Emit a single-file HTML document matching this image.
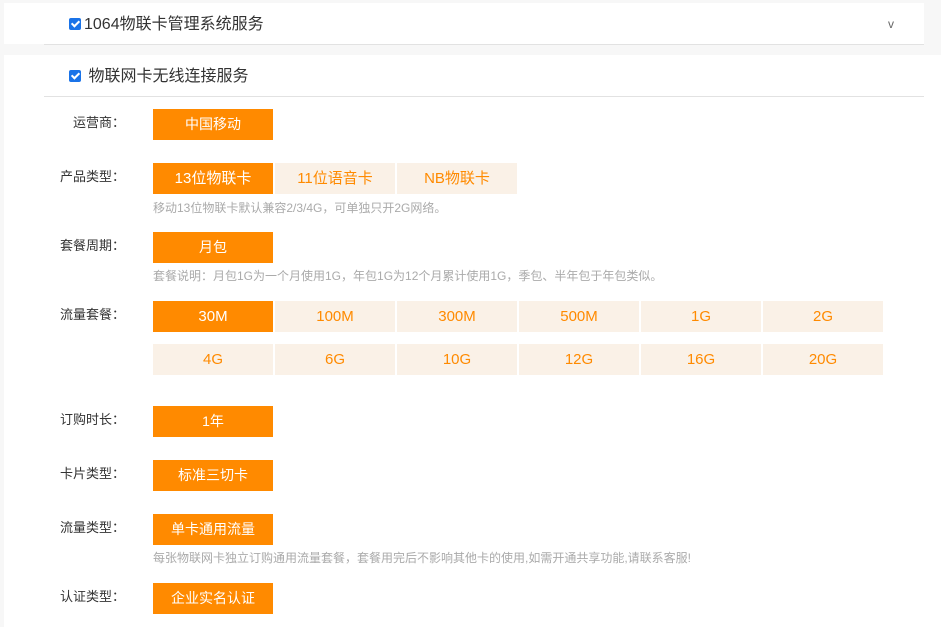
<!DOCTYPE html>
<html><head><meta charset="utf-8"><style>
body{margin:0;width:941px;height:627px;background:#f7f7f7;font-family:"Liberation Sans","Noto Sans CJK SC",sans-serif;position:relative;overflow:hidden}
.card{position:absolute;background:#fff}
.line{position:absolute;left:44px;width:880px;height:1px;background:#e2e2e2}
.t{position:absolute;font-size:16px;color:#333;line-height:20px}
.cb{display:inline-block;width:12px;height:12px;background:#1a73e8;border-radius:2px;vertical-align:-1px;margin-right:3px;position:relative}
.cb:after{content:"";position:absolute;left:3.5px;top:1px;width:3px;height:6px;border:solid #fff;border-width:0 2px 2px 0;transform:rotate(45deg)}
.lb{position:absolute;left:40px;width:85px;text-align:right;font-size:13px;color:#333;line-height:16px}
.b{position:absolute;width:120px;height:31px;line-height:31px;text-align:center;font-size:14px;background:#faf1e7;color:#ff8a00}
.b.f{font-size:15px}
.b.on{background:#ff8a00;color:#fff}
.h{position:absolute;left:153px;font-size:12px;color:#aaa;line-height:14px}
</style></head><body>
<div class="card" style="left:4px;top:3px;width:920px;height:41px"></div>
<div class="line" style="top:44px"></div>
<div class="t" style="left:69px;top:15px"><span class="cb"></span>1064物联卡管理系统服务</div>
<div style="position:absolute;left:888px;top:17px;font-size:12px;color:#666">v</div>
<div class="card" style="left:4px;top:55px;width:937px;height:572px"></div>
<div class="line" style="top:96px"></div>
<div class="t" style="left:69px;top:67px"><span class="cb"></span> 物联网卡无线连接服务</div>

<div class="lb" style="top:115px">运营商：</div>
<div class="b on" style="left:153px;top:109px">中国移动</div>

<div class="lb" style="top:169px">产品类型：</div>
<div class="b on f" style="left:153px;top:163px">13位物联卡</div>
<div class="b f" style="left:275px;top:163px">11位语音卡</div>
<div class="b f" style="left:397px;top:163px">NB物联卡</div>
<div class="h" style="top:201px">移动13位物联卡默认兼容2/3/4G，可单独只开2G网络。</div>

<div class="lb" style="top:238px">套餐周期：</div>
<div class="b on" style="left:153px;top:232px">月包</div>
<div class="h" style="top:269px">套餐说明：月包1G为一个月使用1G，年包1G为12个月累计使用1G，季包、半年包于年包类似。</div>

<div class="lb" style="top:307px">流量套餐：</div>
<div class="b on f" style="left:153px;top:301px">30M</div>
<div class="b f" style="left:275px;top:301px">100M</div>
<div class="b f" style="left:397px;top:301px">300M</div>
<div class="b f" style="left:519px;top:301px">500M</div>
<div class="b f" style="left:641px;top:301px">1G</div>
<div class="b f" style="left:763px;top:301px">2G</div>
<div class="b f" style="left:153px;top:344px">4G</div>
<div class="b f" style="left:275px;top:344px">6G</div>
<div class="b f" style="left:397px;top:344px">10G</div>
<div class="b f" style="left:519px;top:344px">12G</div>
<div class="b f" style="left:641px;top:344px">16G</div>
<div class="b f" style="left:763px;top:344px">20G</div>

<div class="lb" style="top:412px">订购时长：</div>
<div class="b on" style="left:153px;top:406px">1年</div>

<div class="lb" style="top:466px">卡片类型：</div>
<div class="b on" style="left:153px;top:460px">标准三切卡</div>

<div class="lb" style="top:520px">流量类型：</div>
<div class="b on" style="left:153px;top:514px">单卡通用流量</div>
<div class="h" style="top:551px">每张物联网卡独立订购通用流量套餐，套餐用完后不影响其他卡的使用,如需开通共享功能,请联系客服!</div>

<div class="lb" style="top:589px">认证类型：</div>
<div class="b on" style="left:153px;top:583px">企业实名认证</div>
</body></html>
